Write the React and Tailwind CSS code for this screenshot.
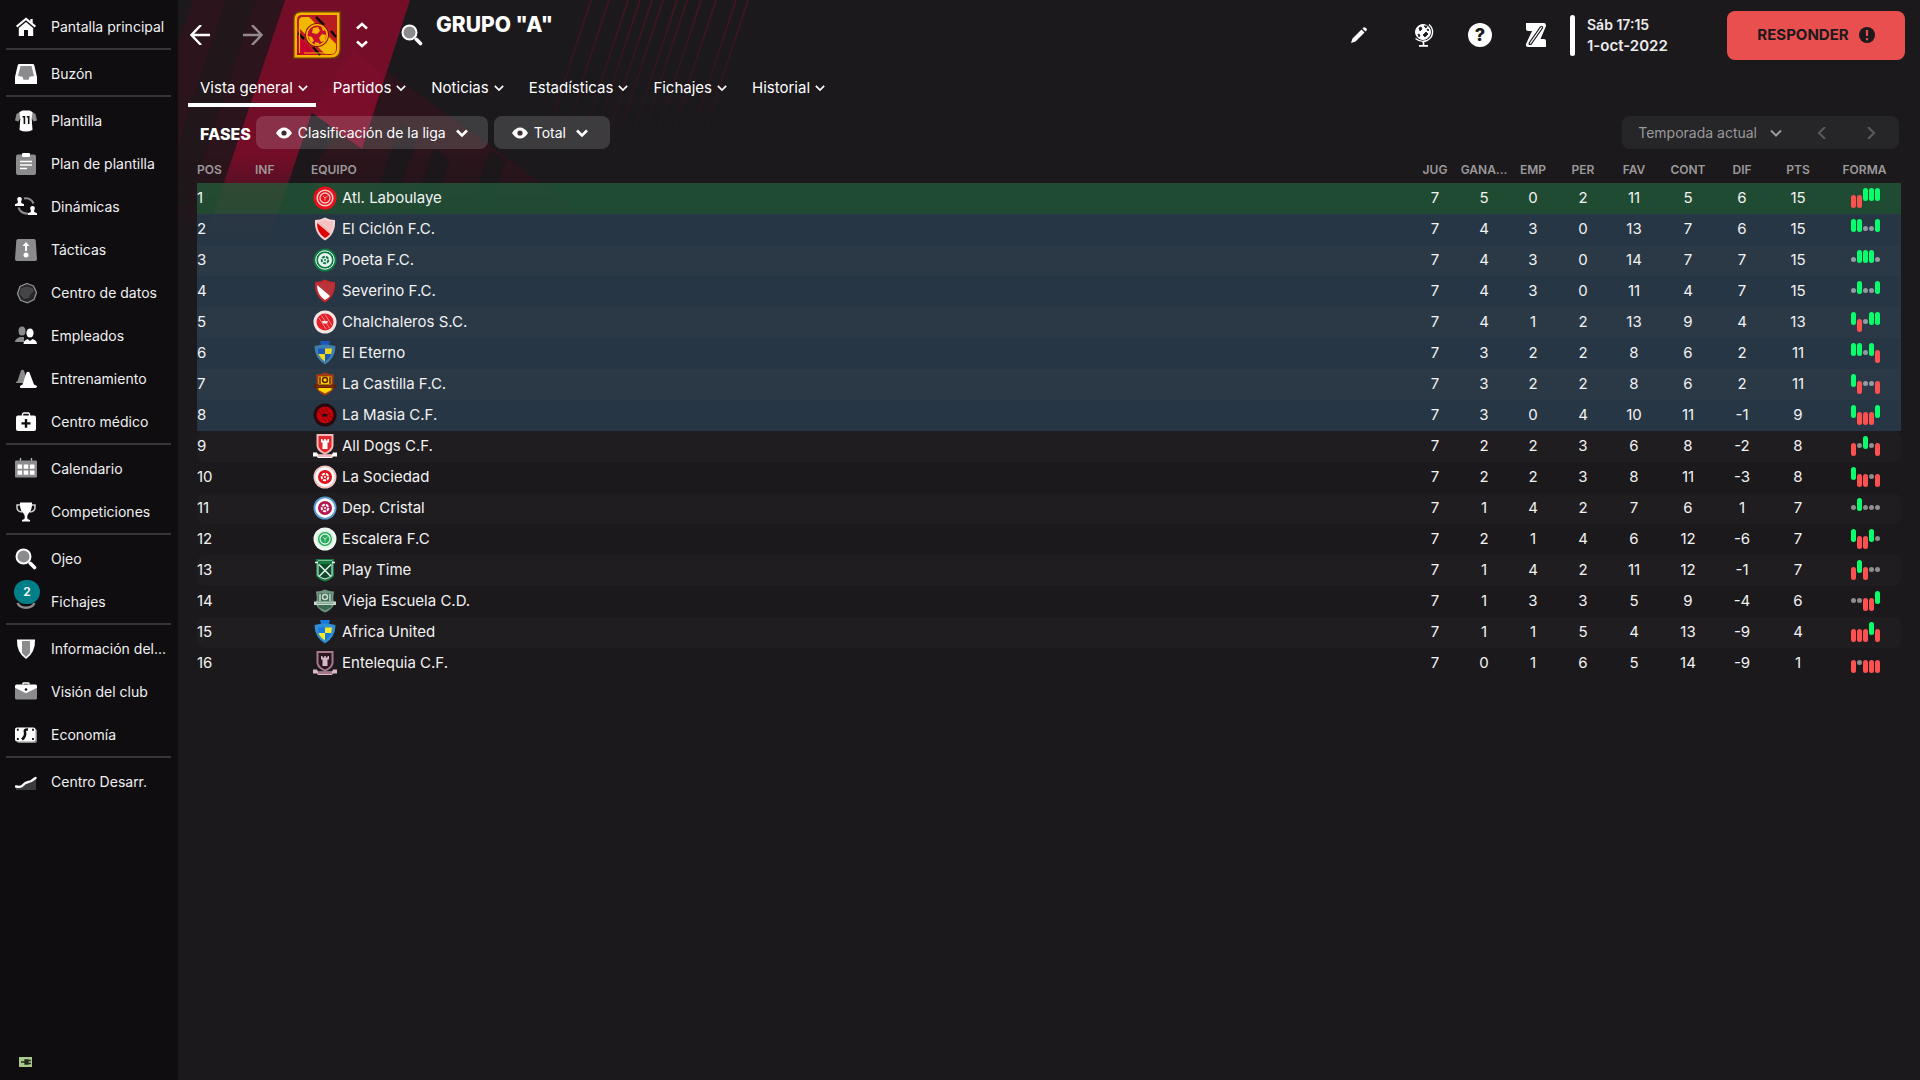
import React from 'react';

const W = '#ffffff';
const G = '#8b8b8d';

// sidebar icons, all drawn on a 22x22 grid
const navIcons = {
    home: (
        <>
            <path d="M11 1.500 1 9.800l1.300 1.600L11 4.300l8.700 7.100L21 9.800l-3.300-2.700V3h-2.400v2z" fill={W} />
            <path d="M11 6 3.800 12v8H9v-6h4v6h5.200v-8z" fill={W} />
        </>
    ),
    inbox: (
        <>
            <path d="M4.500 1h13c1.200 0 1.600.6 1.900 1.800L22 14v7H0v-7L2.600 2.800C2.900 1.600 3.300 1 4.500 1z" fill={W} />
            <path d="M5.500 3h11l2.500 10-4.500.8-1 3h-5l-1-3L3 13z" fill={G} />
        </>
    ),
    shirt: (
        <>
            <path d="M5 2 1.500 4 0 10.500l3.500 1L6 7zM17 2l3.500 2L22 10.500l-3.500 1L16 7z" fill={G} />
            <path d="M7.500.5h7L17.500 2l-.8 7 .8 11q-6.500 3-13 0l.8-11-.8-7z" fill={W} />
            <path d="M7.500 6h2.700v8H8.600V7.600H7.500zM11.800 6h2.700v8h-1.600V7.600h-1.100z" fill="#0f0d10" />
        </>
    ),
    clipboard: (
        <>
            <rect x="1" y="1.500" width="20" height="20.500" rx="2" fill={G} />
            <rect x="7" y="0" width="8" height="4" rx="1" fill={W} />
            <path d="M5 8.500h12M5 12h12M5 15.500h7" stroke={W} strokeWidth="1.300" />
        </>
    ),
    dynamics: (
        <>
            <path d="M9 2.500a8.500 8.500 0 0 1 9.500 5M13 17.500a8.500 8.500 0 0 1-9.500-6" stroke={G} strokeWidth="2.200" fill="none" />
            <path d="M4.500 1a2.300 2.300 0 0 1 2.300 2.500L6 6l.4 1L9 8.200V10H0V8.200L2.700 7l.3-1-.8-2.500A2.300 2.300 0 0 1 4.500 1z" fill={W} />
            <path d="M17.500 10a2.300 2.300 0 0 1 2.300 2.500L19 15l.4 1 2.600 1.200V19h-9v-1.800l2.700-1.200.3-1-.8-2.500A2.300 2.300 0 0 1 17.500 10z" fill={W} />
        </>
    ),
    tactics: (
        <>
            <path d="M3 0h16q1.500 0 1.700 1.500L22 20q0 2-1.500 2h-19Q0 22 0 20L1.300 1.500Q1.500 0 3 0z" fill={G} />
            <path d="M11 3 7.500 7H10v5h2V7h2.500z" fill={W} />
            <circle cx="11" cy="16" r="2.500" fill={W} />
        </>
    ),
    data: (
        <>
            <path d="m12 1.500 6.500 2.500 3 6.500-2.500 7-6.500 3.300-7-2.500-3-6.500L5 4.500z" fill="#262528" stroke="#929294" strokeWidth="1.300" />
            <path d="M12 4.500 17.500 6 19 9l-4 4-1 3-5 1-4.500-5L6 6z" fill="#454446" />
        </>
    ),
    staff: (
        <>
            <ellipse cx="7" cy="6" rx="3.500" ry="4.500" fill={G} />
            <path d="M0 17q0-3 5-5h4v5z" fill={G} />
            <ellipse cx="15" cy="8" rx="3.600" ry="4.600" fill={W} />
            <path d="M8.500 19q0-3.500 4-5l2.500 2 2.500-2q4.500 1.500 4.500 5z" fill={W} />
        </>
    ),
    training: (
        <>
            <path d="M6 2.500Q7.500 1 9 2.500L11 9l-3 6H1q-.5-1 1.500-2z" fill={G} />
            <path d="M11.500 4.500q1.500-1.500 3 0l4.500 12 3 1.500q0 2-1.500 2H6q-1.500 0-1-2l2.500-1.500z" fill={W} />
        </>
    ),
    medical: (
        <>
            <path d="M7.500 5V3.500Q7.500 2 9 2h4q1.500 0 1.500 1.500V5" stroke={W} strokeWidth="1.300" fill="none" />
            <rect x="1" y="4.500" width="20" height="15.500" rx="2" fill={W} />
            <path d="M9.800 8h2.400v3.200h3.300v2.400h-3.300v3.200H9.800v-3.200H6.500v-2.400h3.300z" fill="#0f0d10" />
        </>
    ),
    calendar: (
        <>
            <path d="M5.500 0v4M16.500 0v4" stroke="#bbb" strokeWidth="1.300" />
            <rect x="0" y="2.500" width="22" height="17" rx="1" fill={G} />
            <path d="M2.500 6.500h4.600v4.300H2.500zM8.700 6.500h4.600v4.300H8.700zM14.900 6.500h4.600v4.300h-4.600zM2.500 12.500h4.600v4.300H2.500zM8.700 12.500h4.600v4.300H8.700zM14.900 12.500h4.600v4.300h-4.600z" fill={W} />
        </>
    ),
    trophy: (
        <>
            <path d="M5.500 4H2v2.500q0 4 5 4.500M16.500 4H20v2.500q0 4-5 4.500" stroke="#d0d0d0" strokeWidth="1.500" fill="none" />
            <path d="M5 1.500h12q.4 7-2.600 10-1.900 1.500-2.200 4l.3 2.500 2.500 1v1.500H7V19l2.500-1 .3-2.500q-.3-2.500-2.200-4-3-3-2.600-10z" fill={W} />
        </>
    ),
    search: (
        <>
            <circle cx="8.500" cy="8.500" r="7" fill={G} stroke={W} strokeWidth="2" />
            <path d="m15.300 15.300 4.200 4.200" stroke={W} strokeWidth="3.600" strokeLinecap="round" />
        </>
    ),
    transfers: <path d="M2.500 12a9 7 0 0 0 17 0" stroke={G} strokeWidth="2.400" fill="none" />,
    shield: (
        <>
            <path d="M2 1.500h18q.5 13-9 19.500Q1.500 14.500 2 1.500z" fill={W} />
            <path d="M7 3h8v12l-4 4-4-4z" fill={G} />
        </>
    ),
    briefcase: (
        <>
            <path d="M8 3.500V2.700Q8 2 9 2h4q1 0 1 .7v.8" stroke={W} strokeWidth="1.500" fill="none" />
            <rect x="0" y="4" width="22" height="14.500" rx="1.500" fill={G} />
            <path d="M1.500 3.500h19q1.500 0 1.500 2v1.300L11 12.300 0 6.800V5.500q0-2 1.500-2z" fill={W} />
            <circle cx="11" cy="8.500" r="1.300" fill="#0f0d10" />
        </>
    ),
    money: (
        <>
            <rect x="2" y="5" width="20" height="14" rx="2" fill={G} />
            <rect x="0" y="3.500" width="20.500" height="14" rx="2" fill={W} />
            <path d="M13 5.500q-4-.5-3 3t-3 7" stroke="#0f0d10" strokeWidth="2.600" fill="none" />
            <path d="M2.800 4.800v2M2.800 14v2M18 4.800v2M18 14v2" stroke="#0f0d10" strokeWidth="1.800" />
        </>
    ),
    growth: (
        <>
            <path d="M1 15.500h6L12 11l5-1 4-3v12H1z" fill="#3b3a3d" />
            <path d="M1 15.500q4 1 6-.5 3-3.500 6-4t4-1.500L20.500 7" stroke={W} strokeWidth="2.400" strokeLinecap="round" fill="none" />
        </>
    ),
};

const navGroups = [
    [['home', 'Pantalla principal']],
    [['inbox', 'Buzón']],
    [
        ['shirt', 'Plantilla'],
        ['clipboard', 'Plan de plantilla'],
        ['dynamics', 'Dinámicas'],
        ['tactics', 'Tácticas'],
        ['data', 'Centro de datos'],
        ['staff', 'Empleados'],
        ['training', 'Entrenamiento'],
        ['medical', 'Centro médico'],
    ],
    [['calendar', 'Calendario'], ['trophy', 'Competiciones']],
    [['search', 'Ojeo'], ['transfers', 'Fichajes', 2]],
    [['shield', 'Información del...'], ['briefcase', 'Visión del club'], ['money', 'Economía']],
    [['growth', 'Centro Desarr.']],
];

const tabs = ['Vista general', 'Partidos', 'Noticias', 'Estadísticas', 'Fichajes', 'Historial'];

// crest: [kind, outer, main, accent]
const teams = [
    { name: 'Atl. Laboulaye', crest: ['ring', '#e3121b', '#ffc9c9', '#e3121b'], stats: [7, 5, 0, 2, 11, 5, 6, 15], form: 'LLWWW' },
    { name: 'El Ciclón F.C.', crest: ['sash', '#f7d3d3', '#f5bcbc', '#e00000'], stats: [7, 4, 3, 0, 13, 7, 6, 15], form: 'WWDDW' },
    { name: 'Poeta F.C.', crest: ['ball', '#0d7a43', '#e9f5ee', '#0d7a43'], stats: [7, 4, 3, 0, 14, 7, 7, 15], form: 'DWWWD' },
    { name: 'Severino F.C.', crest: ['sash', '#c4272e', '#b53a40', '#ffffff'], stats: [7, 4, 3, 0, 11, 4, 7, 15], form: 'DWDDW' },
    { name: 'Chalchaleros S.C.', crest: ['stripes', '#f5e6e6', '#e3202a', '#f08a8a'], stats: [7, 4, 1, 2, 13, 9, 4, 13], form: 'WLDWW' },
    { name: 'El Eterno', crest: ['quarters', '#3d7fae', '#f2d71c', '#1a57b8'], stats: [7, 3, 2, 2, 8, 6, 2, 11], form: 'WWDWL' },
    { name: 'La Castilla F.C.', crest: ['banner', '#a03a12', '#ffd400', '#5e1f0a'], stats: [7, 3, 2, 2, 8, 6, 2, 11], form: 'WLDDL' },
    { name: 'La Masia C.F.', crest: ['stripes', '#260a0d', '#c2000b', '#7d0008'], stats: [7, 3, 0, 4, 10, 11, -1, 9], form: 'WLLLW' },
    { name: 'All Dogs C.F.', crest: ['tower', '#f2b9b9', '#e0282e', '#ffffff'], stats: [7, 2, 2, 3, 6, 8, -2, 8], form: 'LDWDL' },
    { name: 'La Sociedad', crest: ['ball', '#f3c4c4', '#e3121b', '#ffffff'], stats: [7, 2, 2, 3, 8, 11, -3, 8], form: 'WLLDL' },
    { name: 'Dep. Cristal', crest: ['ball', '#5b9bd0', '#b5174f', '#ffffff'], stats: [7, 1, 4, 2, 7, 6, 1, 7], form: 'DWDDD' },
    { name: 'Escalera F.C', crest: ['ring', '#eef7f0', '#d7f2df', '#27a85a'], stats: [7, 2, 1, 4, 6, 12, -6, 7], form: 'WLLWD' },
    { name: 'Play Time', crest: ['cross', '#1c7a45', '#157a3d', '#e5f2ea'], stats: [7, 1, 4, 2, 11, 12, -1, 7], form: 'LWLDD' },
    { name: 'Vieja Escuela C.D.', crest: ['banner', '#6f9480', '#3c6b50', '#c9d8cf'], stats: [7, 1, 3, 3, 5, 9, -4, 6], form: 'DDLLW' },
    { name: 'Africa United', crest: ['quarters', '#2f8fd0', '#f7ea2a', '#1878e0'], stats: [7, 1, 1, 5, 4, 13, -9, 4], form: 'LLLWL' },
    { name: 'Entelequia C.F.', crest: ['tower', '#a5788c', '#2b1520', '#d9b9c7'], stats: [7, 0, 1, 6, 5, 14, -9, 1], form: 'LDLLL' },
];

const statHeads = ['JUG', 'GANA...', 'EMP', 'PER', 'FAV', 'CONT', 'DIF', 'PTS', 'FORMA'];

function Crest({ kind, outer, main, accent }) {
    const shield = 'M2 3q5 0 10-2.500Q17 3 22 3q1 14-10 20.500Q1 17 2 3z';
    return (
        <svg viewBox="0 0 24 24" className="size-6 shrink-0" aria-hidden="true">
            {kind === 'ring' && (
                <>
                    <circle cx="12" cy="12" r="11.500" fill={outer} />
                    <circle cx="12" cy="12" r="7.800" fill={accent} stroke={main} strokeWidth="1.600" />
                    <circle cx="12" cy="12" r="5" fill={accent} stroke={main} strokeWidth="1.300" />
                    <path d="m10 10 2 2 2.500-2M12 12v2.500" stroke={main} strokeWidth=".8" fill="none" />
                </>
            )}
            {kind === 'ball' && (
                <>
                    <circle cx="12" cy="12" r="11.500" fill={outer} />
                    <circle cx="12" cy="12" r="9.200" fill={accent} stroke="#ffffff" strokeWidth="1" />
                    <circle cx="12" cy="12" r="7" fill={main} />
                    <circle cx="12" cy="12" r="3.300" fill="none" stroke={accent} strokeWidth="2" strokeDasharray="3 1" />
                    <circle cx="12" cy="12" r="1" fill={accent} />
                </>
            )}
            {kind === 'stripes' && (
                <>
                    <circle cx="12" cy="12" r="11.500" fill={outer} />
                    <circle cx="12" cy="12" r="8.500" fill={main} />
                    <path d="m6 8 7 11M8.500 5.500 16.500 18M12 4.500l7 11" stroke={accent} strokeWidth="1" />
                    <path d="M9 11h6l-1 2.500h-4z" fill={outer} />
                </>
            )}
            {kind === 'sash' && (
                <>
                    <path d={shield} fill={outer} />
                    <path d="M4 5q4 0 8-2 4 2 8 2 .5 10.500-8 16Q3.500 15.500 4 5z" fill={main} />
                    <path d="m4 6 13 11q-2 2.500-5 4Q4 16 4 6z" fill={accent} />
                    <path d="m7 5 12 9M10 4l9.500 7M14 4l6 4" stroke={outer} strokeWidth=".9" />
                </>
            )}
            {kind === 'quarters' && (
                <>
                    <path d="M7 0h10l-1 4H8z" fill={accent} />
                    <path d="M1.500 5Q12 2 22.500 5q0 12-10.500 18.500Q1.500 17 1.500 5z" fill={outer} />
                    <path d="M5 7.500h7V13H5.500zM12 13h6q-1 4-6 7.500z" fill={accent} />
                    <path d="M12 7.500h7l-.8 5.500H12zM5.500 13H12v7.500Q7 17 5.500 13z" fill={main} />
                </>
            )}
            {kind === 'banner' && (
                <>
                    <path d="M3 2.500q5 0 9-2 4 2 9 2-1.500 7 0 13-2 5-9 8-7-3-9-8 1.500-6 0-13z" fill={outer} />
                    <path d="M5.500 4.500h13V18L12 21.500 5.500 18z" fill={main} />
                    <path d="M7 5v7M17 5v7" stroke={accent} strokeWidth="1.500" />
                    <circle cx="12" cy="8" r="2.500" fill="none" stroke={accent} strokeWidth="1.500" />
                    <path d="M1 12.500h22V16H1z" fill={accent} />
                    <path d="M3.500 14.200h17" stroke={outer} strokeWidth="1" />
                </>
            )}
            {kind === 'tower' && (
                <>
                    <path d="M3.500 0h17v12q-1 6-8.500 8.500Q4.500 18 3.500 12z" fill={outer} />
                    <path d="M5.500 2h13v10q-1 4-6.500 6.500Q6.500 16 5.500 12z" fill={main} />
                    <path d="M8 5h1.500v1.500h1.700V5h1.600v1.500h1.700V5H16v3.500h-1.500V15h-5V8.500H8z" fill={accent} />
                    <path d="M0 18.500h4l1 2h14l1-2h4v4h-4l-1 1.500H5l-1-1.500H0z" fill={accent} />
                    <path d="M5 20.500h14v2.500H5z" fill={outer} />
                </>
            )}
            {kind === 'cross' && (
                <>
                    <path d="M3 1h18v17q-4 4.500-9 5.500-5-1-9-5.500z" fill={outer} />
                    <path d="M5 3h14v14.500q-3 2.500-7 3.500-4-1-7-3.500z" fill="#0f4a2a" stroke={accent} strokeWidth="1" />
                    <path d="M5 3h14v3H5z" fill={main} />
                    <path d="m6 6.500 12 12M18 6.500l-12 12M2 4.500h3M19 4.500h3" stroke={accent} strokeWidth="1.500" />
                </>
            )}
        </svg>
    );
}

function Chevron({ className, d = 'M1 3.500 6 8.500l5-5', weight = 2 }) {
    return (
        <svg viewBox="0 0 12 12" className={className} fill="none" stroke="currentColor" strokeWidth={weight} aria-hidden="true">
            <path d={d} />
        </svg>
    );
}

function FormBars({ form }) {
    const styles = {
        W: 'h-[13px] bg-[#08ff6b]',
        L: 'h-[13px] mt-[7px] bg-[#ff5050]',
        D: 'h-[5px] mt-[7px] bg-white/50',
    };
    return (
        <div className="flex h-5 items-start justify-center gap-px pl-px">
            {form.split('').map((r, i) => (
                <span key={i} className={`w-[5px] rounded-full ${styles[r]}`} />
            ))}
        </div>
    );
}

function Sidebar() {
    return (
        <aside className="flex w-[178px] shrink-0 flex-col bg-[#0f0d10] pt-[5px]">
            <nav>
                {navGroups.map((group, gi) => (
                    <ul
                        key={gi}
                        className={`mr-[7px] ml-[6px] ${gi < navGroups.length - 1 ? 'mb-[2px] border-b-2 border-[#363538]' : ''}`}
                    >
                        {group.map(([icon, label, badge]) => (
                            <li key={label}>
                                <a href="#" className="relative flex h-[43px] items-center gap-[14px] pl-[9px] text-sm whitespace-nowrap text-[#f0f0f0]">
                                    <svg viewBox="0 0 22 22" className="size-[22px] shrink-0" aria-hidden="true">{navIcons[icon]}</svg>
                                    {label}
                                    {badge && (
                                        <span className="absolute top-0 left-2 flex h-6 w-[26px] items-center justify-center rounded-full bg-[#007f88] text-xs font-semibold text-white">
                                            {badge}
                                        </span>
                                    )}
                                </a>
                            </li>
                        ))}
                    </ul>
                ))}
            </nav>
            {/* power indicator */}
            <svg viewBox="0 0 14 10" className="mt-auto mb-[13px] ml-[19px] h-[10px] w-[14px]" aria-hidden="true">
                <rect width="13" height="10" fill="#a9c98d" />
                <path d="M2 5h4M6 3h3v4H6zM9 3.500h3M9 6.500h3" stroke="#222b1c" strokeWidth="1.300" fill="#222b1c" />
            </svg>
        </aside>
    );
}

function Backdrop() {
    const lines = [569, 557, 537, 522, 508, 498, 484, 473, 461, 449, 430, 412];
    return (
        <svg className="pointer-events-none absolute top-0 left-0 h-[260px] w-[640px]" viewBox="0 0 640 260" aria-hidden="true">
            <defs>
                <linearGradient id="fade" x1="0" y1="0" x2="0" y2="1">
                    <stop offset="0" stopColor="#fff" />
                    <stop offset=".6" stopColor="#fff" />
                    <stop offset=".95" stopColor="#000" />
                </linearGradient>
                <linearGradient id="lineFade" x1="0" y1="0" x2="0" y2="1">
                    <stop offset="0" stopColor="#6b1026" stopOpacity=".5" />
                    <stop offset="1" stopColor="#6b1026" stopOpacity="0" />
                </linearGradient>
                <mask id="backdropMask">
                    <rect width="640" height="260" fill="url(#fade)" />
                </mask>
            </defs>
            <g mask="url(#backdropMask)">
                {/* dim maroon panels */}
                <path d="M15 0h92L20 260H0V90l-15-8z" fill="#2b141b" />
                <path d="M48 0h30L10 205H0v-60z" fill="#21161a" />
                <path d="M209 71 365 184l92 76H60z" fill="#2b141b" />
                {/* main crimson band */}
                <path d="M107 0h125l-48 149-50-36-48 147H20z" fill="#740d28" />
                <path d="M175 50 206 75l-22 74-50-36z" fill="#7f0f2c" fillOpacity=".5" />
                {/* dark cuts */}
                <path d="m134 113 17 12-43 135H84zM208 166l14-44 18 13-41 125h-22zM256 148l16 12-34 100h-22zM312 150l16 11-34 99h-20z" fill="#1c171a" />
                {lines.map((x) => (
                    <path key={x} d={`M${x} 0h2l-58 175h-1z`} fill="url(#lineFade)" />
                ))}
            </g>
        </svg>
    );
}

function TopBar() {
    return (
        <header className="flex h-[70px] items-center pr-[15px] pl-3 text-white">
            <button aria-label="Atrás">
                <svg viewBox="0 0 20 20" className="size-5" fill="none" stroke="currentColor" strokeWidth="2.400"><path d="M20 10H1.500M11 0 1.500 10 11 20" /></svg>
            </button>
            <button aria-label="Adelante" className="ml-[33px] text-white/50">
                <svg viewBox="0 0 20 20" className="size-5" fill="none" stroke="currentColor" strokeWidth="2.400"><path d="M0 10h18.500M9 0l9.500 10L9 20" /></svg>
            </button>
            <svg viewBox="0 0 48 48" className="ml-[30px] size-12" aria-hidden="true">
                <path d="M8 0h40v38q0 10-10 10H0V8q0-8 8-8z" fill="#6a3a0c" />
                <path d="M8 1.500h38.500V38q0 8.500-8.500 8.500H1.500V8q0-6.500 6.500-6.500z" fill="#f5b400" />
                <path d="M9 4h35v33q0 7-7 7H4V9q0-5 5-5z" fill="#b81d22" />
                <path d="M4 24 24 44H4z" fill="#c8002f" />
                <path d="M6 10q0-4 4-4h6l27 27v5q0 5-5 5h-6L6 17z" fill="#f2b800" />
                <path d="m18 6 26 27M4 18l26 26" stroke="#d8221c" strokeWidth="1" />
                <path d="m23 6 8 8M38 20l5 6M5 22l6 6M20 36l7 8" stroke="#14080a" strokeWidth="2.500" />
                <circle cx="24" cy="24" r="12" fill="#8a1015" />
                <circle cx="24" cy="24" r="10.200" fill="#c8102e" stroke="#f5b400" strokeWidth="1.600" />
                <path d="m20 17 5-1 2 4-3 3-5-1zM29 23l4 1-1 6-4 1-2-4zM15 25l4 1 2 4-3 2zM22 31l4 1v2l-4-1zM28 15l4 4-2 1z" fill="#f5b400" />
                <path d="M6.500 42V11M11 42h26q5 0 5-5" stroke="#f5b400" strokeWidth="1.200" fill="none" />
            </svg>
            <div className="ml-[15px] flex flex-col gap-[6px]">
                <button aria-label="Anterior"><Chevron className="size-3" d="M1 8.500 6 4l5 4.500" weight={2.5} /></button>
                <button aria-label="Siguiente"><Chevron className="size-3" d="M1 3.500 6 8l5-4.500" weight={2.5} /></button>
            </div>
            <button aria-label="Buscar" className="ml-[33px]">
                <svg viewBox="0 0 22 22" className="size-[22px]">{navIcons.search}</svg>
            </button>
            <h1 className="ml-[13px] self-start pt-[11px] text-[21px] leading-7 font-extrabold">GRUPO "A"</h1>

            <div className="ml-auto flex items-center">
                <button aria-label="Editar" className="mr-[9px] flex w-14 justify-center">
                    <svg viewBox="0 0 16 16" className="size-4" fill="currentColor"><path d="m0 16 1.500-4.500L10.500 2.500 13.500 5.500 4.500 14.500zM11.500 1.500 12.500.5Q13.500 0 15 1t.5 2.500L14.500 4.500z" /></svg>
                </button>
                <button aria-label="Mundo" className="flex w-14 justify-center">
                    <svg viewBox="0 0 20 24" className="h-6 w-5" fill="none" stroke="currentColor">
                        <circle cx="9" cy="9" r="7.500" fill="currentColor" />
                        <path d="M15 1.500Q19 5 18.500 10T13 17.500q-6 2.500-11.500-2" strokeWidth="1.400" />
                        <path d="M9.500 18v4.500M5 22.800h9" strokeWidth="1.700" />
                        <path d="m5 5 2-1 1 2-2 2zM10 3h3l-1 2zM4 11l2 1-1 2zM9 12l3-3 2 2-3 3zM13 6l2 1-1 1z" fill="#1b191c" stroke="#1b191c" strokeWidth=".8" />
                    </svg>
                </button>
                <button aria-label="Ayuda" className="flex w-14 justify-center">
                    <span className="flex size-6 items-center justify-center rounded-full bg-white text-lg leading-6 font-extrabold text-[#1b191c]">?</span>
                </button>
                <button aria-label="Zona" className="flex w-14 justify-center">
                    <svg viewBox="0 0 22 24" className="h-6 w-[22px]">
                        <path d="M1 0h18q2 0 2 3L15.500 16H19q2 0 2 2v6H3q-2.500 0-2-3L7 8H3Q1 8 1 6z" fill="#fff" />
                        <path d="M15 4.500 4.500 19.500q-1 2 .5 2t2-1.500L17.500 5q.5-1.500-1-1.500T15 4.500z" fill="none" stroke="#1b191c" strokeWidth="1.200" />
                    </svg>
                </button>
                <div className="ml-[6px] h-[41px] w-[5px] rounded-full bg-white" />
                <div className="ml-3 w-[140px] font-semibold text-[#ececec]">
                    <p className="text-sm leading-[21px]">Sáb 17:15</p>
                    <p className="text-[15px] leading-[21px]">1-oct-2022</p>
                </div>
                <button className="flex h-[49px] w-[178px] items-center justify-center gap-[10px] rounded-lg bg-[#e94f4f] text-[15px] font-bold text-[#1b191c]">
                    RESPONDER
                    <svg viewBox="0 0 16 16" className="size-4" aria-hidden="true">
                        <circle cx="8" cy="8" r="8" fill="#1b191c" />
                        <path d="M8 3v6M8 11v2.200" stroke="#e94f4f" strokeWidth="2.200" />
                    </svg>
                </button>
            </div>
        </header>
    );
}

function ViewSelect({ label, value, className }) {
    return (
        <label className={`flex h-[33px] items-center rounded-lg bg-white/15 text-white ${className}`}>
            <svg viewBox="0 0 16 12" className="mr-[6px] h-3 w-4 shrink-0" aria-hidden="true">
                <path d="M0 6q3.500-5.500 8-5.500T16 6q-3.500 5.500-8 5.500T0 6z" fill="#fff" />
                <circle cx="8" cy="6" r="2.600" fill="#3a2c32" />
            </svg>
            <select aria-label={label} className="h-6 field-sizing-content appearance-none bg-transparent pr-1 text-sm outline-none">
                <option>{value}</option>
            </select>
            <Chevron className="pointer-events-none ml-[6px] size-3 shrink-0" weight={2.5} />
        </label>
    );
}

export default function App() {
    return (
        <div className="flex min-h-screen bg-[#1b191c] font-['Inter',sans-serif]">
            <Sidebar />
            <main className="relative min-w-0 flex-1">
                <Backdrop />
                <div className="relative">
                    <TopBar />

                    <nav className="flex gap-[5px] pl-[10px]">
                        {tabs.map((tab, i) => (
                            <button
                                key={tab}
                                className={`flex h-[37px] items-center gap-[5px] border-b-4 pt-[3px] pr-2 pl-3 text-[15px] text-white ${i === 0 ? 'border-white' : 'border-transparent'}`}
                            >
                                {tab}
                                <Chevron className="size-[10px]" />
                            </button>
                        ))}
                    </nav>

                    <div className="mt-[9px] flex items-center pr-[21px] pl-[22px]">
                        <h2 className="mr-[5px] pt-[3px] text-base font-extrabold text-white">FASES</h2>
                        <ViewSelect label="Vista" value="Clasificación de la liga" className="mr-[6px] px-5" />
                        <ViewSelect label="Partidos" value="Total" className="pr-[22px] pl-[18px]" />
                        <div className="ml-auto flex h-[33px] items-center rounded-lg bg-white/5 pr-[22px] pl-4 text-[#9a999b]">
                            <label className="flex items-center">
                                <select aria-label="Temporada" className="h-6 field-sizing-content appearance-none bg-transparent pr-1 text-sm outline-none">
                                    <option>Temporada actual</option>
                                </select>
                                <Chevron className="pointer-events-none ml-[9px] size-3" />
                            </label>
                            <button aria-label="Temporada anterior" className="ml-[34px] text-[#5c5a5d]"><Chevron className="size-3" d="M9 0 3 6l6 6" /></button>
                            <button aria-label="Temporada siguiente" className="ml-[37px] text-[#5c5a5d]"><Chevron className="size-3" d="m3 0 6 6-6 6" /></button>
                        </div>
                    </div>

                    <div className="px-[19px]">
                        <table className="w-full table-fixed border-collapse text-[15px] text-[#f2f2f2]">
                            <colgroup>
                                <col className="w-[58px]" />
                                <col className="w-14" />
                                <col />
                                <col className="w-[50px]" />
                                <col className="w-12" />
                                <col className="w-[50px]" />
                                <col className="w-[50px]" />
                                <col className="w-[52px]" />
                                <col className="w-14" />
                                <col className="w-[52px]" />
                                <col className="w-[60px]" />
                                <col className="w-[73px]" />
                            </colgroup>
                            <thead>
                                <tr className="h-[34px] text-xs text-[#9c999b]">
                                    <th className="pt-[7px] text-left font-semibold">POS</th>
                                    <th className="pt-[7px] text-left font-semibold">INF</th>
                                    <th className="pt-[7px] text-left font-semibold">EQUIPO</th>
                                    {statHeads.map((h) => (
                                        <th key={h} className="pt-[7px] text-center font-semibold whitespace-nowrap">{h}</th>
                                    ))}
                                </tr>
                            </thead>
                            <tbody>
                                {teams.map((team, i) => {
                                    const [kind, outer, main, accent] = team.crest;
                                    const zone = i === 0 ? 'bg-[#1e5835]/75' : i < 8 ? 'bg-[#293c4b]/85' : '';
                                    const stripe = i % 2 === 0 ? 'bg-white/[0.02]' : '';
                                    const roundL = i >= 8 ? 'rounded-l-lg' : '';
                                    const roundR = i >= 8 ? 'rounded-r-lg' : '';
                                    return (
                                        <tr key={team.name} className={`h-[31px] ${zone}`}>
                                            <td className={`p-0 pb-px ${stripe} ${roundL}`}>{i + 1}</td>
                                            <td className={`p-0 ${stripe}`} />
                                            <td className={`p-0 pb-px ${stripe}`}>
                                                <div className="flex items-center gap-[5px] pl-[2px]">
                                                    <Crest kind={kind} outer={outer} main={main} accent={accent} />
                                                    {team.name}
                                                </div>
                                            </td>
                                            {team.stats.map((n, si) => (
                                                <td key={si} className={`p-0 pb-px text-center ${stripe}`}>{n}</td>
                                            ))}
                                            <td className={`p-0 pb-[2px] ${stripe} ${roundR}`}><FormBars form={team.form} /></td>
                                        </tr>
                                    );
                                })}
                            </tbody>
                        </table>
                    </div>
                </div>
            </main>
        </div>
    );
}
